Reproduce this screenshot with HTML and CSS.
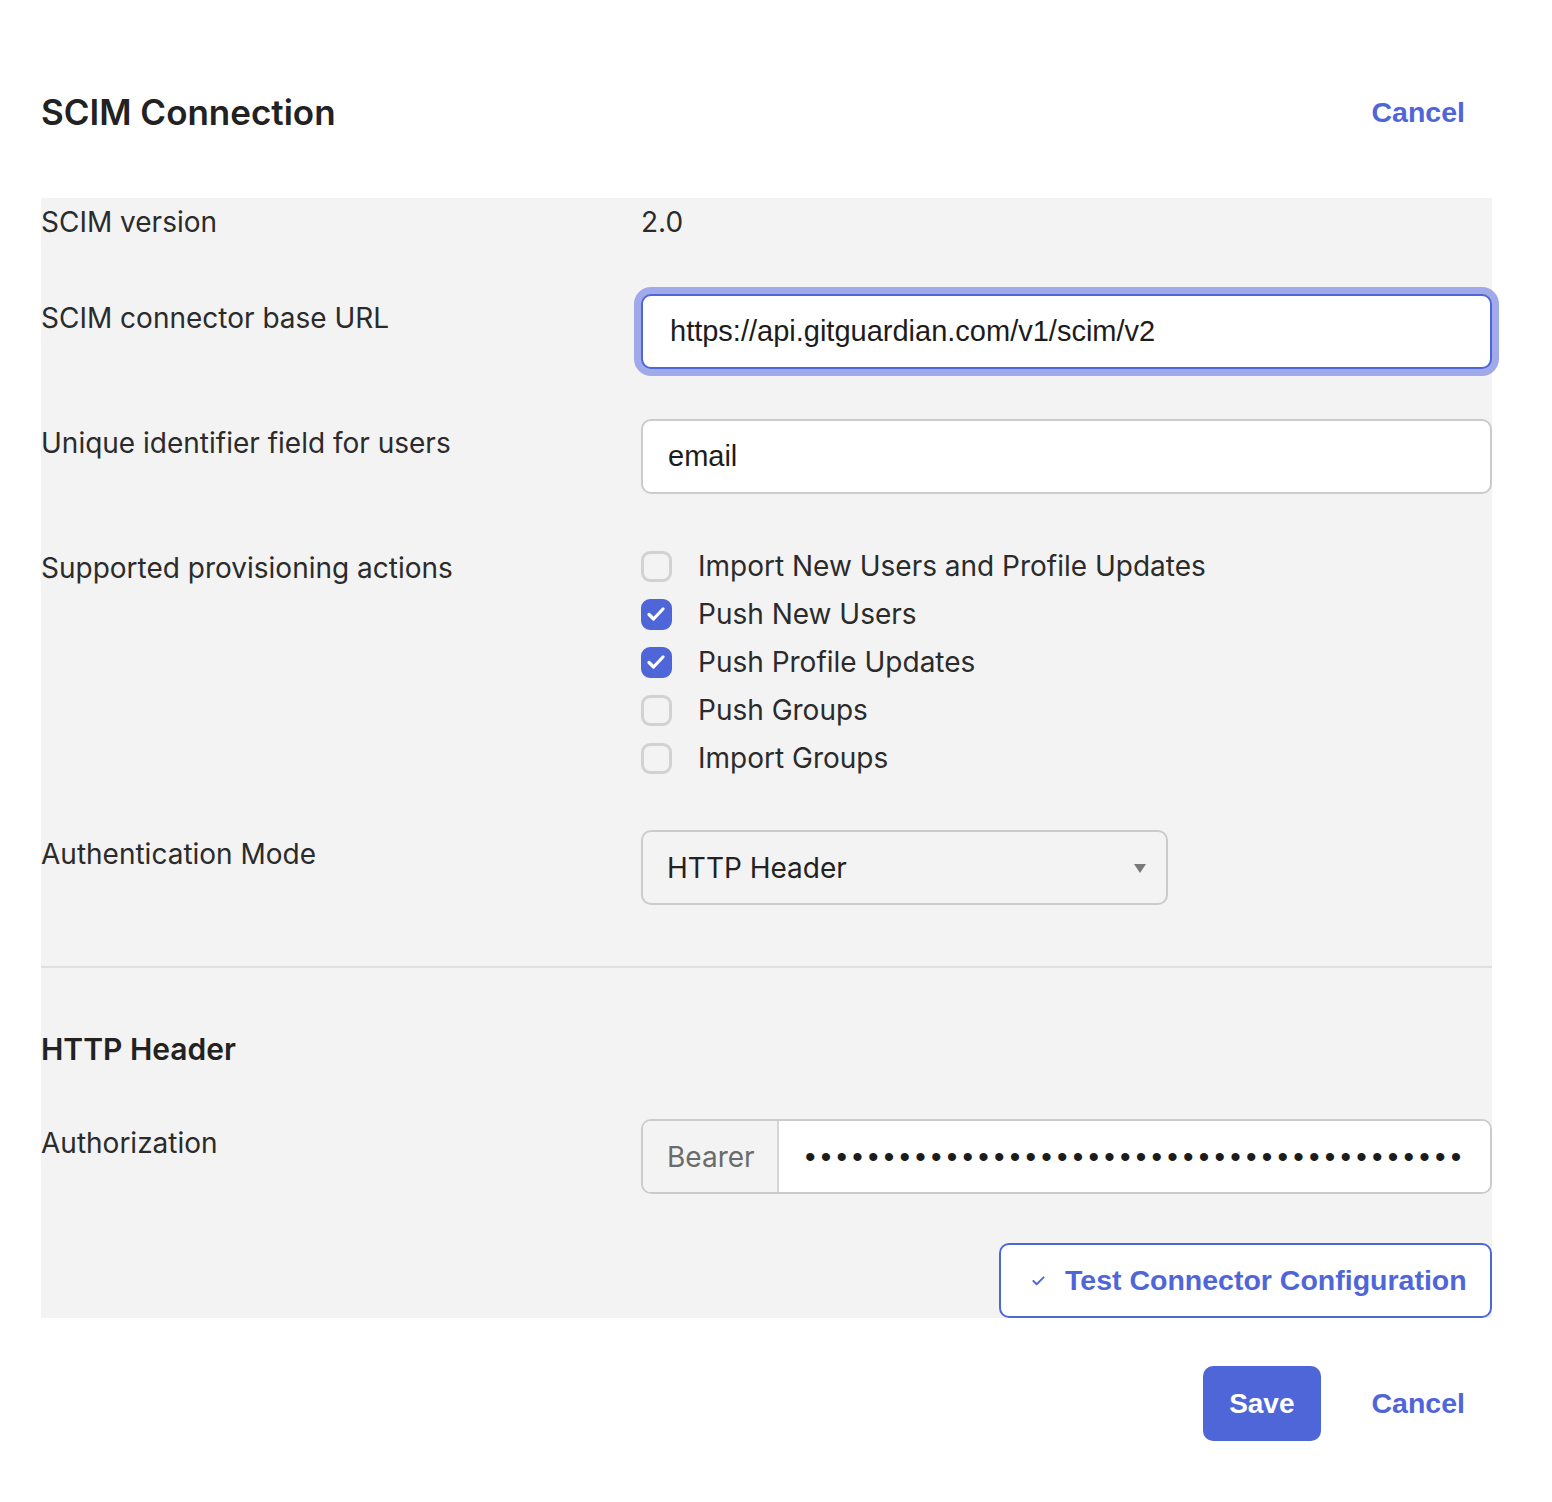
FILE: index.html
```html
<!DOCTYPE html>
<html lang="en">
<head>
  <meta charset="UTF-8" />
  <meta name="viewport" content="width=device-width, initial-scale=1.0"/>
  <title>SCIM Connection</title>
  <link rel="stylesheet" href="styles.css">
</head>
<body>
  <div class="page">
    <div class="header">
      <h1>SCIM Connection</h1>
      <a class="link" href="#">Cancel</a>
    </div>

    <form class="panel">
      <div class="row row-static">
        <div class="label">SCIM version</div>
        <div class="value">2.0</div>
      </div>

      <div class="row">
        <label class="label">SCIM connector base URL</label>
        <input class="field focused" value="https://api.gitguardian.com/v1/scim/v2" />
      </div>

      <div class="row">
        <label class="label">Unique identifier field for users</label>
        <input class="field" value="email" />
      </div>

      <div class="row row-checks">
        <div class="label">Supported provisioning actions</div>
        <div class="checks">
          <label class="check"><input type="checkbox" /><span class="box"></span>Import New Users and Profile Updates</label>
          <label class="check"><input type="checkbox" checked /><span class="box"><svg viewBox="0 0 30 30"><path d="M8 15.5l4.5 4.5 9.5-10" /></svg></span>Push New Users</label>
          <label class="check"><input type="checkbox" checked /><span class="box"><svg viewBox="0 0 30 30"><path d="M8 15.5l4.5 4.5 9.5-10" /></svg></span>Push Profile Updates</label>
          <label class="check"><input type="checkbox" /><span class="box"></span>Push Groups</label>
          <label class="check"><input type="checkbox" /><span class="box"></span>Import Groups</label>
        </div>
      </div>

      <div class="row row-last">
        <label class="label">Authentication Mode</label>
        <div class="select-wrap">
          <select class="select">
            <option>HTTP Header</option>
          </select>
        </div>
      </div>

      <hr class="divider" />

      <h2>HTTP Header</h2>

      <div class="row row-auth">
        <label class="label">Authorization</label>
        <div class="input-group">
          <span class="addon">Bearer</span>
          <input class="secret" type="password" value="xxxxxxxxxxxxxxxxxxxxxxxxxxxxxxxxxxxxxxxxxx" />
        </div>
      </div>

      <div class="actions">
        <button type="button" class="btn-outline">
          <svg viewBox="0 0 14 10"><path d="M1.5 5l3.5 3.5 7.5-7.5" /></svg>
          Test Connector Configuration
        </button>
      </div>
    </form>

    <div class="footer">
      <button type="button" class="btn-primary">Save</button>
      <a class="link" href="#">Cancel</a>
    </div>
  </div>
</body>
</html>
```

FILE: styles.css
```css
body {
  margin: 0;
  font-family: Inter, "Noto Sans", sans-serif;
  color: #2b2b2b;
  background: #fff;
}
.page {
  width: 1451px;
  margin-left: 41px;
}
.header {
  height: 172px;
  padding: 26px 27px 0 0;
  display: flex;
  align-items: center;
  justify-content: space-between;
}
h1 {
  margin: 0;
  font-size: 35px;
  font-weight: 600;
  line-height: 44px;
  color: #222;
}
.link {
  font-family: "Liberation Sans", Arial, sans-serif;
  font-weight: bold;
  font-size: 28.5px;
  color: #4f66d9;
  text-decoration: none;
}
.panel {
  background: #f3f3f3;
}
.row {
  display: grid;
  grid-template-columns: 600px 1fr;
  margin-bottom: 50px;
}
.row-static {
  min-height: 46px;
}
.row-checks {
  margin-bottom: 48px;
}
.row-last {
  margin-bottom: 61px;
}
.row-auth {
  margin-bottom: 49px;
}
.label, .value {
  display: block;
  padding-top: 8px;
  font-size: 28px;
  line-height: 32px;
}
.field {
  box-sizing: border-box;
  width: 100%;
  height: 75px;
  margin: 0;
  padding: 0 25px;
  border: 2px solid #cbcbcb;
  border-radius: 10px;
  background: #fff;
  font-family: "Liberation Sans", Arial, sans-serif;
  font-size: 29px;
  color: #1c1c1c;
  outline: none;
}
.field.focused {
  border-color: #4f66d9;
  box-shadow: 0 0 0 7px #a0aaeb;
  padding-left: 27px;
}
.checks {
  display: flex;
  flex-direction: column;
  margin-top: -2px;
}
.check {
  display: flex;
  align-items: center;
  gap: 26px;
  height: 48px;
  font-size: 28px;
}
.check input {
  display: none;
}
.box {
  box-sizing: border-box;
  width: 31px;
  height: 31px;
  border: 3px solid #d2d2d2;
  border-radius: 9px;
  display: flex;
}
.check input:checked + .box {
  background: #4f66d9;
  border-color: #4f66d9;
}
.box svg {
  width: 30px;
  height: 30px;
  margin: -3px;
  fill: none;
  stroke: #fff;
  stroke-width: 3.2;
  stroke-linecap: round;
  stroke-linejoin: round;
}
.select-wrap {
  position: relative;
  width: 527px;
}
.select-wrap::after {
  content: "";
  position: absolute;
  right: 22px;
  top: 34px;
  border-left: 6px solid transparent;
  border-right: 6px solid transparent;
  border-top: 9px solid #7a7a7a;
}
.select {
  appearance: none;
  box-sizing: border-box;
  width: 100%;
  height: 75px;
  padding: 0 24px;
  border: 2px solid #cbcbcb;
  border-radius: 10px;
  background: #f3f3f3;
  font-family: Inter, sans-serif;
  font-size: 28px;
  color: #222;
}
.divider {
  margin: 0;
  border: none;
  border-top: 2px solid #e0e0e0;
}
h2 {
  margin: 63px 0 52px;
  font-size: 30px;
  font-weight: 600;
  line-height: 36px;
  color: #222;
}
.input-group {
  box-sizing: border-box;
  display: flex;
  height: 75px;
  border: 2px solid #cbcbcb;
  border-radius: 10px;
  background: #fff;
  overflow: hidden;
}
.addon {
  width: 110px;
  padding-left: 24px;
  display: flex;
  align-items: center;
  background: #f3f3f3;
  border-right: 2px solid #d6d6d6;
  font-size: 28px;
  color: #6b6b6b;
}
.secret {
  flex: 1;
  min-width: 0;
  border: none;
  padding: 0 0 0 26px;
  font-family: "Liberation Sans", Arial, sans-serif;
  font-size: 30px;
  letter-spacing: 5.25px;
  color: #1c1c1c;
  outline: none;
  background: #fff;
}
.actions {
  display: flex;
  justify-content: flex-end;
}
.btn-outline {
  box-sizing: border-box;
  height: 75px;
  width: 493px;
  display: flex;
  align-items: center;
  gap: 20px;
  padding: 0 0 0 31px;
  border: 2px solid #4f66d9;
  border-radius: 10px;
  background: #fff;
  font-family: "Liberation Sans", Arial, sans-serif;
  font-weight: bold;
  font-size: 28.5px;
  color: #4f66d9;
}
.btn-outline svg {
  width: 13px;
  height: 10px;
  fill: none;
  stroke: #4f66d9;
  stroke-width: 2;
  stroke-linecap: round;
  stroke-linejoin: round;
}
.footer {
  display: flex;
  justify-content: flex-end;
  align-items: center;
  gap: 51px;
  padding: 48px 27px 0 0;
}
.btn-primary {
  height: 75px;
  padding: 0 26px;
  border: none;
  border-radius: 10px;
  background: #4f66d9;
  font-family: "Liberation Sans", Arial, sans-serif;
  font-weight: bold;
  font-size: 28px;
  color: #fff;
}
```
